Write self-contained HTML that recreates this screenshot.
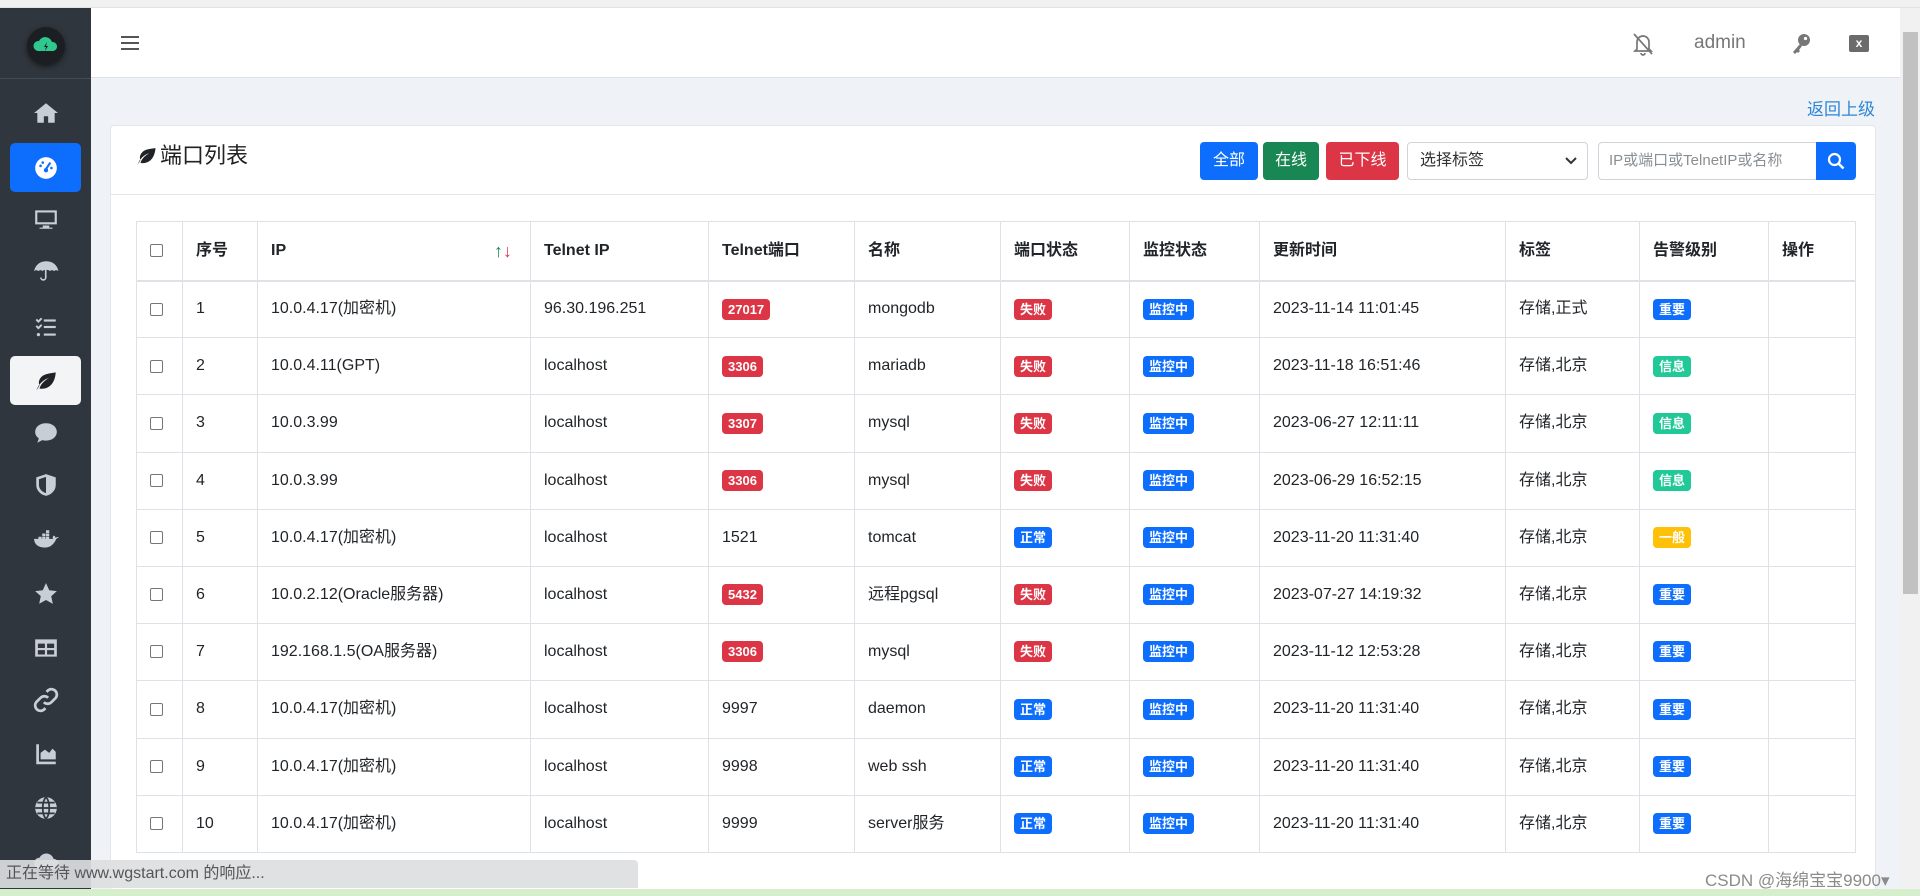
<!DOCTYPE html>
<html><head><meta charset="utf-8">
<style>
*{box-sizing:border-box;margin:0;padding:0}
body{width:1920px;height:896px;overflow:hidden;background:#eff2f6;font-family:"Liberation Sans","Noto Sans CJK SC",sans-serif;color:#212529;position:relative}
.top{position:absolute;left:0;top:0;width:1920px;height:8px;background:#f1f1f1;border-bottom:1px solid #e3e3e3}
.side{position:absolute;left:0;top:8px;width:91px;height:888px;background:#30363d}
.logo{position:absolute;left:27px;top:19px;width:38px;height:38px;border-radius:50%;background:#1b1f23;box-shadow:0 2px 6px rgba(0,0,0,.5)}
.logosep{position:absolute;left:0;top:70px;width:91px;height:1px;background:#444b52}
.ic{position:absolute;left:33px;width:26px;height:26px;fill:#c9ced4}
.act{position:absolute;left:10px;width:71px;height:49px;border-radius:5px}
.hdr{position:absolute;left:91px;top:8px;width:1809px;height:70px;background:#fff;border-bottom:1px solid #dee2e6}
.scroll{position:absolute;left:1900px;top:8px;width:20px;height:880px;background:#f1f1f1}
.thumb{position:absolute;left:1903px;top:32px;width:15px;height:562px;background:#c1c1c1}
.back{position:absolute;left:1807px;top:95px;font-size:17px;color:#2f86d6}
.card{position:absolute;left:110px;top:125px;width:1766px;height:770px;background:#fff;border:1px solid #e3e6ea;border-radius:4px}
.chd{position:absolute;left:0;top:0;width:100%;height:69px;border-bottom:1px solid #e6e6e6}
.ttl{position:absolute;left:24px;top:16px;font-size:22px;color:#222;line-height:28px}
.btn{position:absolute;top:16px;height:38px;border-radius:4px;color:#fff;font-size:16px;line-height:38px;text-align:center}
.sel{position:absolute;left:1296px;top:16px;width:181px;height:38px;border:1px solid #ced4da;border-radius:4px;font-size:16px;line-height:36px;padding-left:12px;color:#333}
.inp{position:absolute;left:1487px;top:16px;width:220px;height:38px;border:1px solid #ced4da;border-radius:4px 0 0 4px;font-size:15px;line-height:36px;padding-left:10px;color:#8a8f94;overflow:hidden;white-space:nowrap}
.sbtn{position:absolute;left:1705px;top:16px;width:40px;height:38px;background:#0d6efd;border-radius:0 4px 4px 0}
table{position:absolute;left:25px;top:95px;border-collapse:collapse;table-layout:fixed;width:1719px;font-size:16px}
td,th{border:1px solid #dee2e6;padding:0 0 0 13px;text-align:left;height:57.2px;white-space:nowrap;overflow:hidden;vertical-align:middle;line-height:22px}
th{height:59px;font-weight:bold;border-bottom:2px solid #dee2e6}
.cb{display:inline-block;width:13px;height:13px;border:1px solid #767676;border-radius:2px;vertical-align:middle}
.b{display:inline-block;font-size:13px;font-weight:bold;color:#fff;padding:3px 6px;border-radius:4px;line-height:15px;vertical-align:middle}
.r{background:#dc3545}.p{background:#0d6efd}.g{background:#20c997}.y{background:#ffc107}
.status{position:absolute;left:0;top:860px;width:638px;height:28px;background:rgba(220,222,224,.92);border-radius:0 4px 0 0;font-size:16px;color:#555;line-height:28px;padding-left:6px}
.green{position:absolute;left:0;top:889px;width:1920px;height:7px;background:#d5efcc}
.csdn{position:absolute;left:1705px;top:866px;font-size:17px;color:#8b8b8b}
</style></head><body>
<div class="top"></div>
<div class="side">
 <div class="logo"><svg width="38" height="38" viewBox="0 0 38 38"><path d="M11 24a5 5 0 0 1 1-10 7 7 0 0 1 13 1 4.5 4.5 0 0 1 1 9z" fill="#2fc98f"/><path d="M20 15l-3 5h2l-1 4 3-5h-2z" fill="#1b1f23"/></svg></div>
 <div class="logosep"></div>
 <svg class="ic" style="top:92px" viewBox="0 0 24 24"><path d="M12 3L1 12h3v9h6v-6h4v6h6v-9h3z"/></svg>
 <div class="act" style="top:135px;background:#0d6efd"></div>
 <svg class="ic" style="top:147px;fill:#fff" viewBox="0 0 24 24"><circle cx="12" cy="12" r="10"/><path d="M12 13l4-6" stroke="#0d6efd" stroke-width="2"/><circle cx="12" cy="14" r="2" fill="#0d6efd"/><circle cx="7" cy="10" r="1.2" fill="#0d6efd"/><circle cx="9" cy="7" r="1.2" fill="#0d6efd"/><circle cx="17" cy="12" r="1.2" fill="#0d6efd"/></svg>
 <svg class="ic" style="top:198px" viewBox="0 0 24 24"><path d="M2 4h20v13H2zM4 6v9h16V6zM9 18h6v2h3v1H6v-1h3z"/></svg>
 <svg class="ic" style="top:250px" viewBox="0 0 24 24"><path d="M12 3C6 3 2 7 1 12c1-1 3-1 4 0 1-1 3-1 4 0 1-1 2-1 2-1v7a1.5 1.5 0 0 1-3 0h-1.5a3 3 0 0 0 6 0v-7c1 0 2 0 3 1 1-1 3-1 4 0 1-1 3-1 4 0-1-5-5-9-11-9z"/></svg>
 <svg class="ic" style="top:306px" viewBox="0 0 24 24"><path d="M3 5l2 2 3-3M3 11l2 2 3-3" stroke="#c9ced4" stroke-width="1.8" fill="none"/><circle cx="5" cy="19" r="1.5"/><rect x="10" y="5" width="11" height="2"/><rect x="10" y="11" width="11" height="2"/><rect x="10" y="18" width="11" height="2"/></svg>
 <div class="act" style="top:348px;background:#f2f4f5"></div>
 <svg class="ic" style="top:360px;fill:#1f2328" viewBox="0 0 24 24"><path d="M3 21c2-6 6-10 12-12-5 3-8 6-9 10 6 1 14-2 15-15-5 1-10 1-13 4-3 3-3 6-2 8-1 2-2 3-3 5z"/></svg>
 <svg class="ic" style="top:412px" viewBox="0 0 24 24"><path d="M12 3C6 3 2 6.5 2 11c0 2.5 1.3 4.6 3.4 6L4 21l4.5-2.4c1.1.3 2.300.4 3.5.4 6 0 10-3.500 10-8s-4-8-10-8z"/></svg>
 <svg class="ic" style="top:464px" viewBox="0 0 24 24"><path d="M12 2L3 5v7c0 5 4 9 9 10 5-1 9-5 9-10V5zM12 4.5v15c-3.5-1-6.5-4-6.5-7.5V6.7z"/></svg>
 <svg class="ic" style="top:519px" viewBox="0 0 24 24"><path d="M1 12h20c1-2 2-2 3-2-1-1-2-1-3 0-.5-1-1-2-2-2-1 1-1 2-.5 3H1c0 5 4 8 10 8 5 0 8-3 10-7z"/><rect x="5" y="9" width="3" height="2.5"/><rect x="8.5" y="9" width="3" height="2.5"/><rect x="12" y="9" width="3" height="2.5"/><rect x="8.5" y="6" width="3" height="2.5"/><rect x="12" y="6" width="3" height="2.5"/><rect x="12" y="3" width="3" height="2.5"/></svg>
 <svg class="ic" style="top:573px" viewBox="0 0 24 24"><path d="M12 2l3 6.5 7 .8-5.2 4.8 1.5 7L12 17.5 5.7 21l1.5-7L2 9.3l7-.8z"/></svg>
 <svg class="ic" style="top:627px" viewBox="0 0 24 24"><path d="M2 4h20v16H2zM4.5 8v4h6.5V8zm8.5 0v4h6.5V8zM4.5 14v4h6.5v-4zm8.5 0v4h6.5v-4z"/></svg>
 <svg class="ic" style="top:679px" viewBox="0 0 24 24"><path d="M10 14a5 5 0 0 0 7 0l4-4a5 5 0 0 0-7-7l-1.5 1.5M14 10a5 5 0 0 0-7 0l-4 4a5 5 0 0 0 7 7l1.5-1.5" stroke="#c9ced4" stroke-width="2.5" fill="none"/></svg>
 <svg class="ic" style="top:733px" viewBox="0 0 24 24"><path d="M3 3h2.5v16H21v2.5H3zM7 17v-6l4-3 4 3 3-4 3 3v7z"/></svg>
 <svg class="ic" style="top:787px" viewBox="0 0 24 24"><circle cx="12" cy="12" r="10"/><path d="M2 12h20M12 2c-4 4-4 16 0 20M12 2c4 4 4 16 0 20M4 7h16M4 17h16" stroke="#30363d" stroke-width="1.6" fill="none"/></svg>
 <svg class="ic" style="top:840px" viewBox="0 0 24 24"><path d="M6 19a5 5 0 0 1 0-10 7 7 0 0 1 13 1 4.5 4.5 0 0 1 0 9z"/></svg>
</div>
<div class="hdr">
 <svg style="position:absolute;left:30px;top:27px" width="18" height="16" viewBox="0 0 18 16"><path d="M0 2h18M0 8h18M0 14h18" stroke="#555" stroke-width="2"/></svg>
 <svg style="position:absolute;left:1541px;top:24px" width="22" height="24" viewBox="0 0 22 24"><path d="M5 17V10a6 6 0 0 1 12 0v7l2 2H3zM9 21a2 2 0 0 0 4 0M2 2l18 20" stroke="#777" stroke-width="1.7" fill="none"/></svg>
 <div style="position:absolute;left:1603px;top:24px;font-size:19px;color:#777">admin</div>
 <svg style="position:absolute;left:1699px;top:24px" width="22" height="24" viewBox="0 0 22 24"><circle cx="14" cy="8" r="6" fill="#777"/><circle cx="15.5" cy="6.5" r="1.6" fill="#fff"/><path d="M10 12L3 20l2 2 2-2 1 1 2-2-1-1 3-4" fill="#777"/></svg>
 <div style="position:absolute;left:1758px;top:27px;width:20px;height:17px;background:#6b6b6b;border-radius:2px;color:#fff;font-size:12px;font-weight:bold;text-align:center;line-height:17px">x</div>
</div>
<div class="scroll"></div><div class="thumb"></div>
<div class="back">返回上级</div>
<div class="card">
 <div class="chd">
  <div class="ttl"><svg width="25" height="22" viewBox="0 0 24 22" style="vertical-align:-3px"><path d="M2 21c2-6 6-10 12-12-5 3-8 6-9 10 6 1 14-2 15-15-5 1-10 1-13 4-3 3-3 6-2 8-1 2-2 3-3 5z" fill="#1f2328"/></svg>端口列表</div>
  <div class="btn" style="left:1089px;width:58px;background:#0d6efd">全部</div>
  <div class="btn" style="left:1152px;width:56px;background:#198754">在线</div>
  <div class="btn" style="left:1215px;width:73px;background:#dc3545">已下线</div>
  <div class="sel">选择标签<svg style="position:absolute;right:10px;top:14px" width="12" height="8" viewBox="0 0 12 8"><path d="M1 1l5 5 5-5" stroke="#333" stroke-width="2" fill="none"/></svg></div>
  <div class="inp">IP或端口或TelnetIP或名称</div>
  <div class="sbtn"><svg style="position:absolute;left:11px;top:10px" width="18" height="18" viewBox="0 0 18 18"><circle cx="7.5" cy="7.5" r="5.5" stroke="#fff" stroke-width="2.2" fill="none"/><path d="M11.5 11.5l5 5" stroke="#fff" stroke-width="2.5"/></svg></div>
 </div>
 <table>
  <colgroup><col style="width:46px"><col style="width:75px"><col style="width:273px"><col style="width:178px"><col style="width:146px"><col style="width:146px"><col style="width:129px"><col style="width:130px"><col style="width:246px"><col style="width:134px"><col style="width:129px"><col style="width:87px"></colgroup>
  <tr><th><span class="cb"></span></th><th>序号</th><th>IP<span style="float:right;margin-right:18px;font-size:18px;font-weight:bold"><span style="color:#198754">↑</span><span style="color:#dc3545">↓</span></span></th><th>Telnet IP</th><th>Telnet端口</th><th>名称</th><th>端口状态</th><th>监控状态</th><th>更新时间</th><th>标签</th><th>告警级别</th><th>操作</th></tr>
  <tr><td><span class="cb"></span></td><td>1</td><td>10.0.4.17(加密机)</td><td>96.30.196.251</td><td><span class="b r">27017</span></td><td>mongodb</td><td><span class="b r">失败</span></td><td><span class="b p">监控中</span></td><td>2023-11-14 11:01:45</td><td>存储,正式</td><td><span class="b p">重要</span></td><td></td></tr>
  <tr><td><span class="cb"></span></td><td>2</td><td>10.0.4.11(GPT)</td><td>localhost</td><td><span class="b r">3306</span></td><td>mariadb</td><td><span class="b r">失败</span></td><td><span class="b p">监控中</span></td><td>2023-11-18 16:51:46</td><td>存储,北京</td><td><span class="b g">信息</span></td><td></td></tr>
  <tr><td><span class="cb"></span></td><td>3</td><td>10.0.3.99</td><td>localhost</td><td><span class="b r">3307</span></td><td>mysql</td><td><span class="b r">失败</span></td><td><span class="b p">监控中</span></td><td>2023-06-27 12:11:11</td><td>存储,北京</td><td><span class="b g">信息</span></td><td></td></tr>
  <tr><td><span class="cb"></span></td><td>4</td><td>10.0.3.99</td><td>localhost</td><td><span class="b r">3306</span></td><td>mysql</td><td><span class="b r">失败</span></td><td><span class="b p">监控中</span></td><td>2023-06-29 16:52:15</td><td>存储,北京</td><td><span class="b g">信息</span></td><td></td></tr>
  <tr><td><span class="cb"></span></td><td>5</td><td>10.0.4.17(加密机)</td><td>localhost</td><td>1521</td><td>tomcat</td><td><span class="b p">正常</span></td><td><span class="b p">监控中</span></td><td>2023-11-20 11:31:40</td><td>存储,北京</td><td><span class="b y">一般</span></td><td></td></tr>
  <tr><td><span class="cb"></span></td><td>6</td><td>10.0.2.12(Oracle服务器)</td><td>localhost</td><td><span class="b r">5432</span></td><td>远程pgsql</td><td><span class="b r">失败</span></td><td><span class="b p">监控中</span></td><td>2023-07-27 14:19:32</td><td>存储,北京</td><td><span class="b p">重要</span></td><td></td></tr>
  <tr><td><span class="cb"></span></td><td>7</td><td>192.168.1.5(OA服务器)</td><td>localhost</td><td><span class="b r">3306</span></td><td>mysql</td><td><span class="b r">失败</span></td><td><span class="b p">监控中</span></td><td>2023-11-12 12:53:28</td><td>存储,北京</td><td><span class="b p">重要</span></td><td></td></tr>
  <tr><td><span class="cb"></span></td><td>8</td><td>10.0.4.17(加密机)</td><td>localhost</td><td>9997</td><td>daemon</td><td><span class="b p">正常</span></td><td><span class="b p">监控中</span></td><td>2023-11-20 11:31:40</td><td>存储,北京</td><td><span class="b p">重要</span></td><td></td></tr>
  <tr><td><span class="cb"></span></td><td>9</td><td>10.0.4.17(加密机)</td><td>localhost</td><td>9998</td><td>web ssh</td><td><span class="b p">正常</span></td><td><span class="b p">监控中</span></td><td>2023-11-20 11:31:40</td><td>存储,北京</td><td><span class="b p">重要</span></td><td></td></tr>
  <tr><td><span class="cb"></span></td><td>10</td><td>10.0.4.17(加密机)</td><td>localhost</td><td>9999</td><td>server服务</td><td><span class="b p">正常</span></td><td><span class="b p">监控中</span></td><td>2023-11-20 11:31:40</td><td>存储,北京</td><td><span class="b p">重要</span></td><td></td></tr>
 </table>
</div>
<div class="status">正在等待 www.wgstart.com 的响应...</div>
<div class="csdn">CSDN @海绵宝宝9900▾</div>
<div class="green"></div>
</body></html>
